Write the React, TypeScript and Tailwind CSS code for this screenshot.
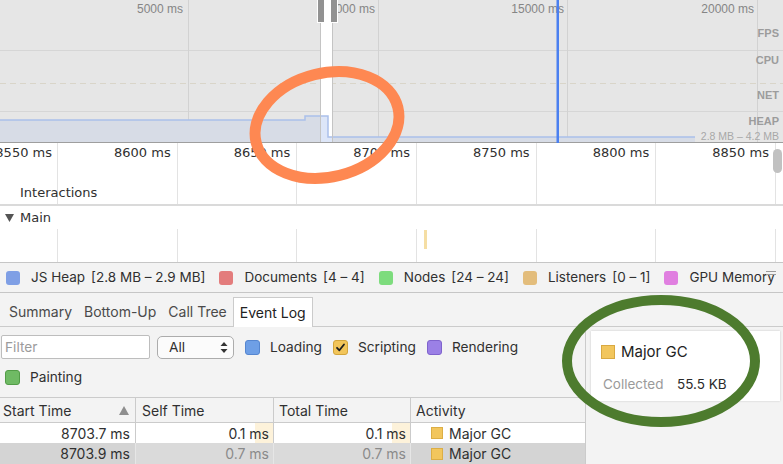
import React from 'react';

const UI = "font-['Inter','Liberation_Sans',sans-serif]";
const CANVAS = "font-['DejaVu_Sans',sans-serif]";

const rulerLabels = ['8550 ms', '8600 ms', '8650 ms', '8700 ms', '8750 ms', '8800 ms', '8850 ms'];

const counters = [
  { name: 'JS Heap', range: '[2.8 MB – 2.9 MB]', color: 'bg-[#7f9fe5]' },
  { name: 'Documents', range: '[4 – 4]', color: 'bg-[#e37c7c]' },
  { name: 'Nodes', range: '[24 – 24]', color: 'bg-[#7ddc7d]' },
  { name: 'Listeners', range: '[0 – 1]', color: 'bg-[#e3bd7c]' },
  { name: 'GPU Memory', range: '', color: 'bg-[#e07fe0]' },
];

function GridLines() {
  return (
    <div className="pointer-events-none absolute inset-0 flex">
      <div className="h-full w-[58px] shrink-0 border-r border-[#e3e3e3]" />
      {[0, 1, 2, 3, 4, 5].map((i) => (
        <div key={i} className="h-full w-[119.67px] shrink-0 border-r border-[#e3e3e3]" />
      ))}
    </div>
  );
}

function Overview() {
  return (
    <div className="relative h-[143px] shrink-0 bg-[#e6e6e6]">
      <svg className="absolute inset-0" width="783" height="143">
        <line x1="0" y1="50.5" x2="783" y2="50.5" stroke="#d6d6d6" />
        <line x1="0" y1="83.5" x2="783" y2="83.5" stroke="#d9d5c9" strokeDasharray="6 4" />
        <line x1="0" y1="111.5" x2="783" y2="111.5" stroke="#d6d6d6" />
        {[188, 378, 567, 757].map((x) => (
          <line key={x} x1={x + 0.5} y1="0" x2={x + 0.5} y2="143" stroke="#d2d2d2" />
        ))}
        <polygon points="0,120 305,120 305,116 328,116 328,137 695,137 695,142 0,142" fill="#d7dce6" />
        <rect x="320" y="0" width="13" height="142" fill="#ffffff" />
        <polygon points="320,116 328,116 328,137 333,137 333,142 320,142" fill="#dde6f8" />
        <polyline points="0,120 305,120 305,116 328,116 328,137 695,137" fill="none" stroke="#aac0ea" strokeWidth="1.5" />
        <line x1="320.5" y1="0" x2="320.5" y2="142" stroke="#c4c4c4" />
        <line x1="332.5" y1="0" x2="332.5" y2="142" stroke="#c4c4c4" />
        <line x1="0" y1="142.5" x2="783" y2="142.5" stroke="#9e9e9e" />
      </svg>
      <span className="absolute right-[600px] top-[1px] text-[12px] leading-[16px] text-[#858585] font-['Liberation_Sans',sans-serif]">5000 ms</span>
      <span className="absolute right-[408px] top-[1px] text-[12px] leading-[16px] text-[#858585] font-['Liberation_Sans',sans-serif]">10000 ms</span>
      <span className="absolute right-[219px] top-[1px] text-[12px] leading-[16px] text-[#858585] font-['Liberation_Sans',sans-serif]">15000 ms</span>
      <span className="absolute right-[29px] top-[1px] text-[12px] leading-[16px] text-[#858585] font-['Liberation_Sans',sans-serif]">20000 ms</span>
      <div className="absolute right-[4px] top-0 flex flex-col items-end font-['Liberation_Sans',sans-serif] font-bold text-[#9c9c9c]">
        <span className="mt-[26px] text-[11px] leading-[14px]">FPS</span>
        <span className="mt-[13px] text-[11px] leading-[14px]">CPU</span>
        <span className="mt-[21px] text-[11px] leading-[14px]">NET</span>
        <span className="mt-[12px] text-[11px] leading-[14px]">HEAP</span>
        <span className="mt-[1px] text-[10.5px] font-normal leading-[14px] text-[#a8a8a8]">2.8 MB – 4.2 MB</span>
      </div>
      <svg className="absolute inset-0" width="783" height="143">
        <rect x="317" y="0" width="21" height="23" fill="#ffffff" />
        <rect x="318" y="0" width="6" height="22" fill="#929292" />
        <rect x="331" y="0" width="6" height="22" fill="#929292" />
        <rect x="556.5" y="0" width="2.5" height="143" fill="#4b80f0" />
      </svg>
    </div>
  );
}

function Timeline() {
  return (
    <div className={`${CANVAS} text-[13px] text-[#303030]`}>
      <div className="relative h-[63px] border-b-2 border-[#dadada]">
        <GridLines />
        <div className="relative flex h-[20px] items-center whitespace-nowrap">
          <div className="flex w-[58px] shrink-0 justify-end pr-[6px]">{rulerLabels[0]}</div>
          {rulerLabels.slice(1).map((l) => (
            <div key={l} className="flex w-[119.67px] shrink-0 justify-end pr-[7px]">
              {l}
            </div>
          ))}
        </div>
        <div className="relative mt-[22px] pl-[20px] leading-[16px]">Interactions</div>
        <div className="absolute right-[1px] top-[6px] h-[24px] w-[9px] rounded-full bg-[#c1c1c1]" />
      </div>
      <div className="flex h-[23px] items-center bg-white pl-[5px]">
        <svg width="9" height="8" viewBox="0 0 9 8">
          <polygon points="0,0 9,0 4.5,8" fill="#555" />
        </svg>
        <span className="ml-[6px] leading-[16px]">Main</span>
      </div>
      <div className="relative h-[33px]">
        <GridLines />
        <div className="absolute left-[424px] top-[1px] h-[19px] w-[3px] bg-[#f5dea4]" />
      </div>
    </div>
  );
}

function Counters() {
  return (
    <div className="relative flex h-[31px] items-center gap-[14px] whitespace-nowrap border-y border-[#c6c6c6] bg-[#f3f3f3] pl-[6px] text-[13.5px] text-[#303030]">
      {counters.map((c) => (
        <div key={c.name} className="flex items-center">
          <span className={`h-[14px] w-[14px] rounded-[3px] ${c.color}`} />
          <span className="ml-[11px]">{c.name}</span>
          {c.range && <span className="ml-[6px]">{c.range}</span>}
        </div>
      ))}
      <div className="absolute right-[7px] top-[8px] flex w-[10px] flex-col gap-[2px]">
        <span className="h-px bg-[#9a9a9a]" />
        <span className="h-px bg-[#9a9a9a]" />
      </div>
    </div>
  );
}

function Tabs() {
  const tabs = ['Summary', 'Bottom-Up', 'Call Tree'];
  return (
    <div className="flex h-[34px] items-end border-b border-[#cbcbcb] bg-[#f3f3f3] pl-[3px] text-[14px]">
      {tabs.map((t) => (
        <div key={t} className="flex h-[29px] items-center px-[6px] text-[#4a4a4a]">
          {t}
        </div>
      ))}
      <div className="-mb-px flex h-[30px] items-center border border-b-0 border-[#cbcbcb] bg-white px-[6px] text-[#222]">
        Event Log
      </div>
    </div>
  );
}

function Check({ label, box, checked }: { label: string; box: string; checked?: boolean }) {
  return (
    <div className="flex h-[22px] items-center pl-[4px]">
      <span className={`flex h-[15px] w-[15px] items-center justify-center rounded-[3px] border ${box}`}>
        {checked && (
          <svg width="11" height="11" viewBox="0 0 11 11">
            <path d="M2 5.8 L4.4 8.3 L9 2.5" fill="none" stroke="#1f1f1f" strokeWidth="1.8" strokeLinecap="round" strokeLinejoin="round" />
          </svg>
        )}
      </span>
      <span className="ml-[10px] text-[#303030]">{label}</span>
    </div>
  );
}

function Toolbar() {
  return (
    <div className="flex flex-wrap items-center gap-x-[7px] gap-y-[7px] bg-[#f3f3f3] pb-[9px] pl-[1px] pt-[8px] text-[13.7px]">
      <div className="flex h-[24px] w-[149px] items-center rounded-[2px] border border-[#bdbdbd] bg-white pl-[3px] text-[#9b9b9b]">
        Filter
      </div>
      <div className="flex h-[23px] w-[77px] items-center justify-between rounded-[5px] border border-[#acacac] bg-[#fbfbfb] pl-[11px] pr-[5px] text-[#303030]">
        All
        <svg width="8" height="13" viewBox="0 0 8 13">
          <polygon points="4,1 7.5,5 0.5,5" fill="#333" />
          <polygon points="0.5,8 7.5,8 4,12" fill="#333" />
        </svg>
      </div>
      <Check label="Loading" box="bg-[#6e9fe6] border-[#5586d0]" />
      <Check label="Scripting" box="bg-[#f2c55a] border-[#d3a53b]" checked />
      <Check label="Rendering" box="bg-[#9b80e6] border-[#7f63cd]" />
      <Check label="Painting" box="bg-[#6fba64] border-[#529c47]" />
    </div>
  );
}

function Square() {
  return <span className="h-[12px] w-[12px] shrink-0 border border-[#dcae45] bg-[#f2c65d]" />;
}

function EventTable() {
  return (
    <div className="grid grid-cols-[136px_138px_137px_1fr] text-[14px] text-[#303030]">
      <div className="relative flex h-[26px] items-center border-y border-r border-[#cbcbcb] bg-[#f3f3f3] pl-[3px]">
        Start Time
        <svg className="absolute right-[6px] top-[8px]" width="10" height="9" viewBox="0 0 10 9">
          <polygon points="5,0 10,9 0,9" fill="#8e8e8e" />
        </svg>
      </div>
      <div className="flex h-[26px] items-center border-y border-r border-[#cbcbcb] bg-[#f3f3f3] pl-[6px]">Self Time</div>
      <div className="flex h-[26px] items-center border-y border-r border-[#cbcbcb] bg-[#f3f3f3] pl-[5px]">Total Time</div>
      <div className="flex h-[26px] items-center border-y border-[#cbcbcb] bg-[#f3f3f3] pl-[5px]">Activity</div>

      <div className="flex h-[20px] items-center justify-end border-r border-[#cbcbcb] bg-white pr-[5px]">8703.7 ms</div>
      <div className="relative flex h-[20px] items-center justify-end border-r border-[#cbcbcb] bg-white pr-[4px]">
        <span className="absolute right-0 top-0 h-full w-[18px] bg-[#fdf2da]" />
        <span className="relative">0.1 ms</span>
      </div>
      <div className="relative flex h-[20px] items-center justify-end border-r border-[#cbcbcb] bg-white pr-[4px]">
        <span className="absolute right-0 top-0 h-full w-[18px] bg-[#fdf2da]" />
        <span className="relative">0.1 ms</span>
      </div>
      <div className="flex h-[20px] items-center gap-[6px] bg-white pl-[20px]">
        <Square />
        Major GC
      </div>

      <div className="flex h-[21px] items-center justify-end border-r border-[#e6e6e6] bg-[#d4d4d4] pr-[5px]">8703.9 ms</div>
      <div className="flex h-[21px] items-center justify-end border-r border-[#e6e6e6] bg-[#dadada] pr-[4px] text-[#8a8a8a]">0.7 ms</div>
      <div className="flex h-[21px] items-center justify-end border-r border-[#e6e6e6] bg-[#dadada] pr-[4px] text-[#8a8a8a]">0.7 ms</div>
      <div className="flex h-[21px] items-center gap-[6px] bg-[#d4d4d4] pl-[20px]">
        <Square />
        Major GC
      </div>
    </div>
  );
}

function Details() {
  return (
    <div className="flex-1 bg-[#f3f3f3] pl-[5px] pr-[3px] pt-[4px]">
      <div className="h-[70px] bg-white pl-[10px] pt-[10px] shadow-[0_0_2px_rgba(0,0,0,0.18)]">
        <div className="flex items-center gap-[6px] text-[15px] text-[#222]">
          <span className="h-[14px] w-[14px] border border-[#d9a942] bg-[#f2c65d]" />
          Major GC
        </div>
        <div className="mt-[10px] flex pl-[2px] text-[13.5px]">
          <span className="w-[74px] text-[#9a9a9a]">Collected</span>
          <span className="text-[#2a2a2a]">55.5 KB</span>
        </div>
      </div>
    </div>
  );
}

function Annotations() {
  return (
    <svg className="pointer-events-none absolute inset-0" width="783" height="464">
      <ellipse cx="327" cy="125" rx="73" ry="52" transform="rotate(-14 327 125)" fill="none" stroke="#fe8852" strokeWidth="11" />
      <ellipse cx="661" cy="361" rx="94" ry="61" fill="none" stroke="#4d7b2e" strokeWidth="10" />
    </svg>
  );
}

export default function App() {
  return (
    <div className={`relative flex h-[464px] w-[783px] flex-col overflow-hidden bg-white ${UI}`}>
      <Overview />
      <Timeline />
      <Counters />
      <Tabs />
      <div className="flex min-h-0 flex-1">
        <div className="flex w-[586px] shrink-0 flex-col border-r border-[#cbcbcb]">
          <Toolbar />
          <EventTable />
        </div>
        <Details />
      </div>
      <Annotations />
    </div>
  );
}
